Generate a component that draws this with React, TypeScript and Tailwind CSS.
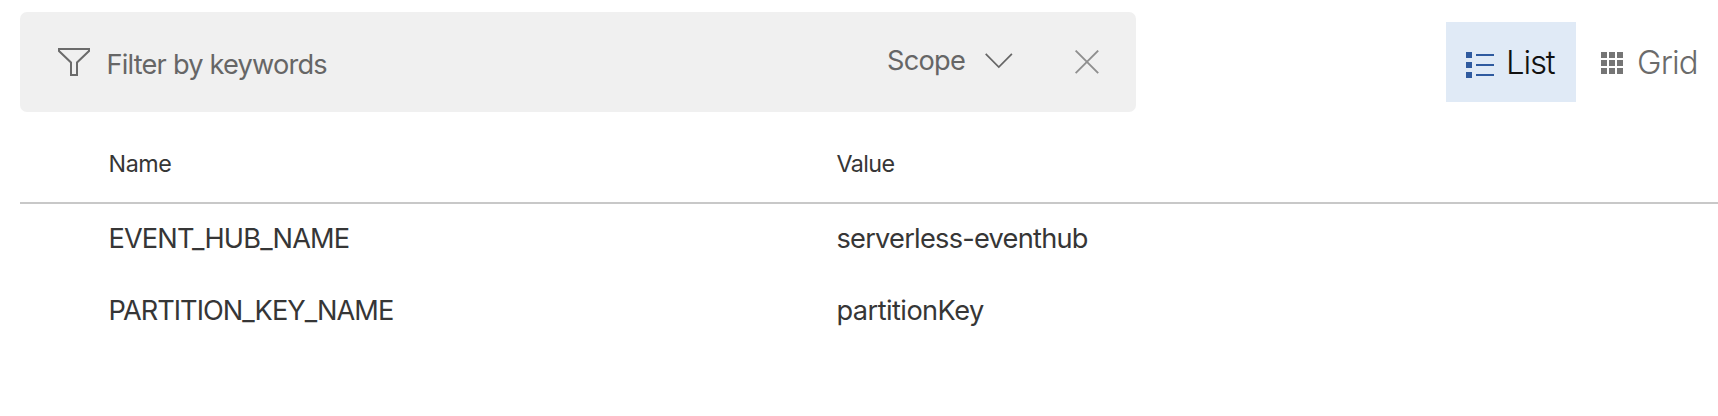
const variables = [
  { name: 'EVENT_HUB_NAME', value: 'serverless-eventhub', nameTracking: 'tracking-[-0.87px]', valueTracking: 'tracking-[-0.75px]' },
  { name: 'PARTITION_KEY_NAME', value: 'partitionKey', nameTracking: 'tracking-[-0.98px]', valueTracking: 'tracking-[-0.56px]' },
];

function FunnelIcon() {
  return (
    <svg width="32" height="28" viewBox="0 0 32 28" fill="none" stroke="#6b6b6b" strokeWidth="2">
      <path d="M1 1H31V3L19 14.5V27H13V14.5L1 3Z" />
    </svg>
  );
}

function ChevronIcon() {
  return (
    <svg width="28" height="16" viewBox="0 0 28 16" fill="none" stroke="#666666" strokeWidth="1.7">
      <path d="M0.7 0.9L13.8 14L26.9 0.9" />
    </svg>
  );
}

function CloseIcon() {
  return (
    <svg width="24" height="24" viewBox="0 0 24 24" fill="none" stroke="#8f8f8f" strokeWidth="1.9">
      <path d="M0.6 0.6L23.2 23.2M23.2 0.6L0.6 23.2" />
    </svg>
  );
}

function ListIcon() {
  return (
    <svg width="28" height="26" viewBox="0 0 28 26" fill="#2f5a9f">
      <path d="M0 0h6v6H0zM0 10h6v6H0zM0 20h6v6H0zM10 2h18v2H10zM10 12h18v2H10zM10 22h18v2H10z" />
    </svg>
  );
}

function GridIcon() {
  return (
    <svg width="22" height="22" viewBox="0 0 22 22" fill="#757575">
      <path d="M0 0h6v6H0zM8 0h6v6H8zM16 0h6v6h-6zM0 8h6v6H0zM8 8h6v6H8zM16 8h6v6h-6zM0 16h6v6H0zM8 16h6v6H8zM16 16h6v6h-6z" />
    </svg>
  );
}

export default function App() {
  return (
    <div className="h-[416px] overflow-hidden bg-white pt-3 pl-5 font-[Inter,sans-serif] text-[27.2px] text-[#363636]">
      <header className="flex h-[100px] items-start">
        <div className="flex h-full w-[1116px] items-center rounded-[7px] bg-[#f0f0f0] pr-[37px] pl-[38px] text-[#666666]">
          <FunnelIcon />
          <span className="ml-[16.5px] pt-1.5 tracking-[-0.8px]">Filter by keywords</span>
          <button className="ml-auto flex items-center pb-0.5">
            <span className="tracking-[-0.77px]">Scope</span>
            <span className="ml-5">
              <ChevronIcon />
            </span>
          </button>
          <button className="ml-[62px]">
            <CloseIcon />
          </button>
        </div>
        <nav className="mt-2.5 ml-auto flex h-20 text-[33px] font-light">
          <button className="flex h-20 w-[130px] items-center bg-[#e0eaf6] pl-5 text-[#111111]">
            <span className="pt-1.5">
              <ListIcon />
            </span>
            <span className="ml-[12px] pt-0.5 tracking-[-1.2px]">List</span>
          </button>
          <button className="flex h-20 w-[142px] items-center pl-[25px] text-[#6b6b6b]">
            <span className="pt-0.5">
              <GridIcon />
            </span>
            <span className="ml-[14px] pt-0.5 tracking-[-0.9px]">Grid</span>
          </button>
        </nav>
      </header>

      <div className="flex h-[92px] items-center border-b-2 border-[#c8c8c8] pt-[15px] pl-[88.5px] text-[23.3px]">
        <span className="w-[728px] tracking-[-0.4px]">Name</span>
        <span className="tracking-[-0.6px]">Value</span>
      </div>
      {variables.map((v) => (
        <div key={v.name} className="flex h-[72px] items-center pb-px pl-[88.5px]">
          <span className={`w-[728px] ${v.nameTracking}`}>{v.name}</span>
          <span className={v.valueTracking}>{v.value}</span>
        </div>
      ))}
    </div>
  );
}
